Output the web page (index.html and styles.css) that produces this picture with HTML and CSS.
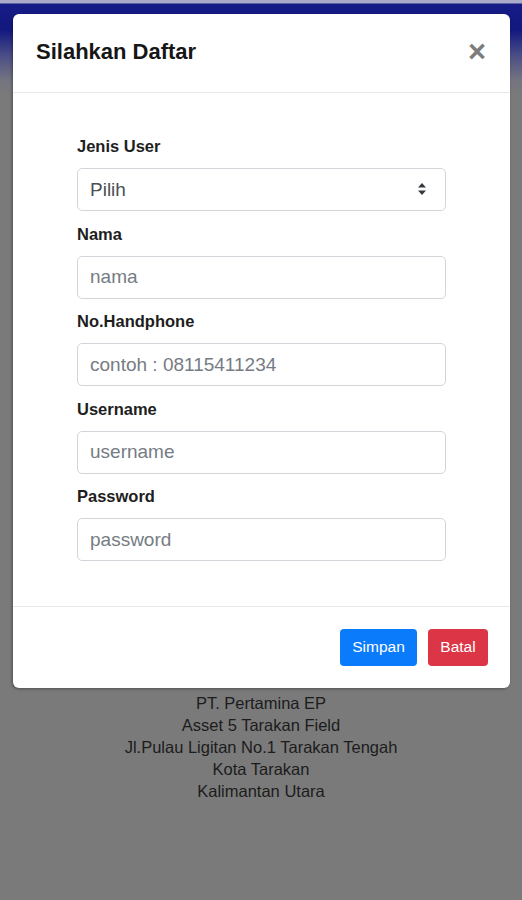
FILE: index.html
```html
<!DOCTYPE html>
<html>
<head>
<meta charset="utf-8">
<link rel="stylesheet" href="styles.css">
</head>
<body>
<div class="modal">
  <div class="modal-header">
    <h5 class="modal-title">Silahkan Daftar</h5>
    <span class="close">&times;</span>
  </div>
  <div class="modal-body">
    <div class="group">
      <label>Jenis User</label>
      <div class="select-wrap">
        <div class="control select">Pilih</div>
        <svg class="arrows" width="10" height="14" viewBox="0 0 10 14"><path d="M5 1 L9 5.5 H1 Z M5 13 L9 8.5 H1 Z" fill="#343a40"/></svg>
      </div>
    </div>
    <div class="group">
      <label>Nama</label>
      <input class="control" type="text" placeholder="nama">
    </div>
    <div class="group">
      <label>No.Handphone</label>
      <input class="control" type="text" placeholder="contoh : 08115411234">
    </div>
    <div class="group">
      <label>Username</label>
      <input class="control" type="text" placeholder="username">
    </div>
    <div class="group">
      <label>Password</label>
      <input class="control" type="text" placeholder="password">
    </div>
  </div>
  <div class="modal-footer">
    <button class="btn btn-primary">Simpan</button>
    <button class="btn btn-danger">Batal</button>
  </div>
</div>
<div class="address">
  <div>PT. Pertamina EP</div>
  <div>Asset 5 Tarakan Field</div>
  <div>Jl.Pulau Ligitan No.1 Tarakan Tengah</div>
  <div>Kota Tarakan</div>
  <div>Kalimantan Utara</div>
</div>
</body>
</html>
```
FILE: styles.css
```css
html, body {
  margin: 0;
  padding: 0;
}
body {
  width: 522px;
  min-height: 900px;
  font-family: "Liberation Sans", Arial, sans-serif;
  background: linear-gradient(to bottom, #a9abc8 0px, #a9abc8 3px, #161c86 4px, #12187f 30px, #4a4d86 55px, #747480 80px, #7a7a7a 95px, #7a7a7a 100%);
  overflow: hidden;
}
.modal {
  margin: 14px 12px 0 13px;
  background: #fff;
  border-radius: 6px;
  box-shadow: -1px 1px 3px rgba(0,0,0,0.35);
  overflow: hidden;
}
.modal-header {
  height: 79px;
  box-sizing: border-box;
  border-bottom: 1px solid #e6e8eb;
  display: flex;
  align-items: center;
  justify-content: space-between;
  padding: 0 24px 2px 23px;
}
.modal-title {
  margin: 0;
  font-size: 22px;
  font-weight: 700;
  color: #161616;
}
.close {
  font-size: 31px;
  font-weight: 700;
  color: #7d7d7d;
  line-height: 1;
  margin-top: -2px;
}
.modal-body {
  padding: 41px 64px 34px 64px;
}
.group {
  display: flex;
  flex-direction: column;
  margin-bottom: 10.5px;
}
label {
  font-size: 16.5px;
  font-weight: 700;
  color: #1e1e1e;
  line-height: 24px;
  margin-bottom: 10px;
}
.control {
  box-sizing: border-box;
  height: 43px;
  width: 100%;
  border: 1px solid #d2d6da;
  border-radius: 5px;
  padding: 0 12px;
  font-family: "Liberation Sans", Arial, sans-serif;
  font-size: 19px;
  color: #495057;
  background: #fff;
  outline: none;
}
.control::placeholder {
  color: #767c83;
}
.select-wrap {
  position: relative;
}
.select {
  display: flex;
  align-items: center;
  color: #4a4f55;
}
.arrows {
  position: absolute;
  right: 19px;
  top: 14px;
}
.modal-footer {
  border-top: 1px solid #e6e8eb;
  display: flex;
  justify-content: flex-end;
  gap: 11px;
  padding: 22px 22px 22px 0;
}
.btn {
  height: 37px;
  border: none;
  border-radius: 4px;
  color: #fff;
  font-family: "Liberation Sans", Arial, sans-serif;
  font-size: 15.5px;
  padding: 0 12px;
}
.btn-primary {
  background: #0a7bfa;
  width: 77px;
}
.btn-danger {
  background: #dc3545;
  width: 60px;
}
.address {
  margin-top: 4px;
  text-align: center;
  font-size: 16.5px;
  line-height: 22px;
  color: #1c1c1c;
}
```
